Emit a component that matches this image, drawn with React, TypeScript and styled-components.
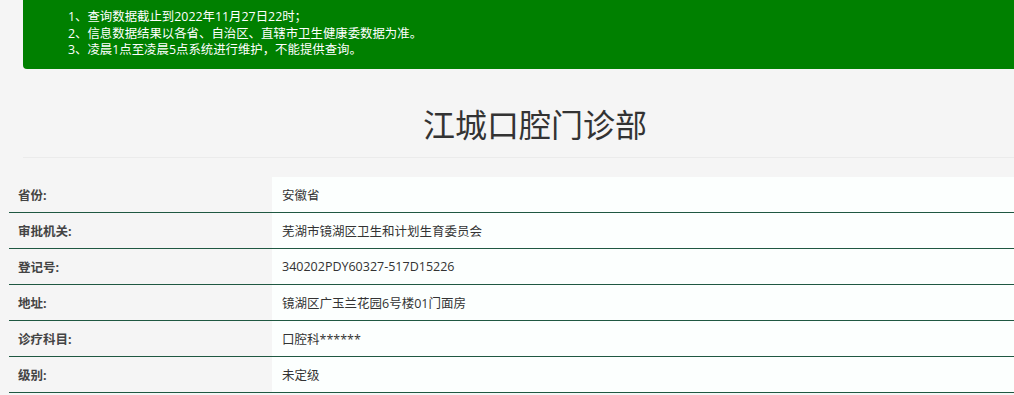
import styled, { createGlobalStyle } from "styled-components";

const GlobalStyle = createGlobalStyle`
  html, body {
    margin: 0;
    padding: 0;
    background: #f5f5f5;
    overflow: hidden;
  }
  body {
    font-family: "Open Sans", "Noto Sans CJK SC", sans-serif;
    color: #333;
  }
`;

const Page = styled.div`
  display: flex;
  flex-direction: column;
  width: 1014px;
  min-height: 395px;
`;

const Notice = styled.div`
  margin-left: 23px;
  width: 1040px;
  height: 69px;
  box-sizing: border-box;
  padding: 9px 0 0 45px;
  background: #008000;
  border-bottom-left-radius: 4px;
  color: #fff;
  font-size: 12.4px;
  line-height: 16.5px;
`;

const NoticeLine = styled.div`
  white-space: nowrap;
`;

const TitleWrap = styled.div`
  margin-left: 23px;
  width: 1024px;
  box-sizing: border-box;
  padding: 38px 0 14px;
  border-bottom: 1px solid #ebebeb;
  text-align: center;
`;

const Title = styled.h1`
  margin: 0;
  font-size: 32px;
  font-weight: 400;
  line-height: 36px;
  color: #333;
`;

const Table = styled.div`
  margin: 19px 0 0 9px;
  width: 1040px;
  display: flex;
  flex-direction: column;
`;

const Row = styled.div`
  display: grid;
  grid-template-columns: 263px 1fr;
  border-bottom: 1px solid #1f5842;
`;

const Label = styled.div`
  height: 35px;
  display: flex;
  align-items: center;
  padding-left: 9px;
  background: #f5f5f5;
  font-size: 12.5px;
  font-weight: 700;
  color: #444;
`;

const Value = styled.div`
  height: 35px;
  display: flex;
  align-items: center;
  padding-left: 10px;
  background: #fcfffe;
  font-size: 12.5px;
  color: #333;
`;

const notices = [
  "1、查询数据截止到2022年11月27日22时；",
  "2、信息数据结果以各省、自治区、直辖市卫生健康委数据为准。",
  "3、凌晨1点至凌晨5点系统进行维护，不能提供查询。",
];

const rows: Array<[string, string]> = [
  ["省份:", "安徽省"],
  ["审批机关:", "芜湖市镜湖区卫生和计划生育委员会"],
  ["登记号:", "340202PDY60327-517D15226"],
  ["地址:", "镜湖区广玉兰花园6号楼01门面房"],
  ["诊疗科目:", "口腔科******"],
  ["级别:", "未定级"],
];

export default function App() {
  return (
    <Page>
      <GlobalStyle />
      <Notice>
        {notices.map((n) => (
          <NoticeLine key={n}>{n}</NoticeLine>
        ))}
      </Notice>
      <TitleWrap>
        <Title>江城口腔门诊部</Title>
      </TitleWrap>
      <Table>
        {rows.map(([label, value]) => (
          <Row key={label}>
            <Label>{label}</Label>
            <Value>{value}</Value>
          </Row>
        ))}
      </Table>
    </Page>
  );
}
